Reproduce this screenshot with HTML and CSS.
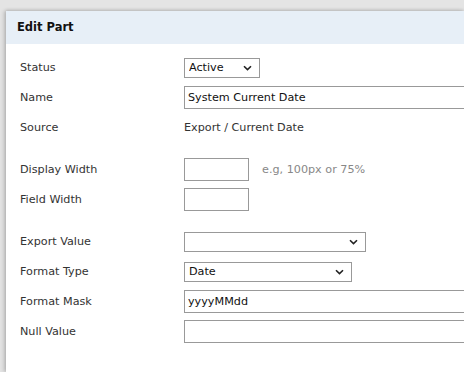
FILE: index.html
```html
<!DOCTYPE html>
<html lang="en">
<head>
	<meta charset="UTF-8">
	<title>Edit Part</title>
	<link rel="stylesheet" href="styles.css">
</head>
<body>
	<div class="panel">
		<div class="panel-head">Edit Part</div>
		<div class="panel-body">
			<div class="row">
				<label>Status</label>
				<span class="sel w-status">
					<select><option>Active</option></select>
					<svg class="chev" width="9" height="6" viewBox="0 0 9 6"><path d="M1 1.2 L4.5 4.6 L8 1.2" fill="none" stroke="#222" stroke-width="1.6"/></svg>
				</span>
			</div>
			<div class="row">
				<label>Name</label>
				<input class="txt w-full" type="text" value="System Current Date">
			</div>
			<div class="row">
				<label>Source</label>
				<span class="val">Export / Current Date</span>
			</div>
			<div class="row sep">
				<label>Display Width</label>
				<input class="txt w-small" type="text">
				<span class="hint">e.g, 100px or 75%</span>
			</div>
			<div class="row">
				<label>Field Width</label>
				<input class="txt w-small" type="text">
			</div>
			<div class="row sep">
				<label>Export Value</label>
				<span class="sel w-export">
					<select><option></option></select>
					<svg class="chev" width="9" height="6" viewBox="0 0 9 6"><path d="M1 1.2 L4.5 4.6 L8 1.2" fill="none" stroke="#222" stroke-width="1.6"/></svg>
				</span>
			</div>
			<div class="row">
				<label>Format Type</label>
				<span class="sel w-format">
					<select><option>Date</option></select>
					<svg class="chev" width="9" height="6" viewBox="0 0 9 6"><path d="M1 1.2 L4.5 4.6 L8 1.2" fill="none" stroke="#222" stroke-width="1.6"/></svg>
				</span>
			</div>
			<div class="row">
				<label>Format Mask</label>
				<input class="txt w-full" type="text" value="yyyyMMdd">
			</div>
			<div class="row">
				<label>Null Value</label>
				<input class="txt w-full" type="text">
			</div>
		</div>
	</div>
</body>
</html>
```

FILE: styles.css
```css
html, body {
	margin: 0;
	padding: 0;
	background: #e4e4e4;
	overflow: hidden;
}
body {
	font-family: "DejaVu Sans", Verdana, sans-serif;
	font-size: 11.2px;
	color: #333;
}
/* 面板 */
.panel {
	margin: 11px 0 0 6px;
	width: calc(100vw - 6px);
	height: calc(100vh - 11px);
	overflow: hidden;
	background: #fff;
	box-shadow: -2px 0 4px rgba(0,0,0,0.18), 0 -1px 3px rgba(0,0,0,0.12);
}
.panel-head {
	height: 33px;
	line-height: 33px;
	padding-left: 11px;
	background: #e7eff7;
	font-weight: bold;
	font-size: 11.5px;
	color: #111;
}
.panel-body {
	padding: 12px 0 0 14px;
}
/* 表单行 */
.row {
	display: flex;
	align-items: center;
	height: 23px;
	margin-bottom: 7px;
}
.row.sep {
	margin-top: 19px;
}
.row label {
	width: 164px;
	flex: none;
}
.val {
	color: #333;
}
.hint {
	margin-left: 13px;
	color: #888;
}
.txt {
	box-sizing: border-box;
	height: 23px;
	border: 1px solid #999;
	padding: 0 3px;
	font-family: inherit;
	font-size: 11.2px;
	color: #111;
	outline: none;
	margin: 0;
}
.w-full { width: 300px; flex: none; }
.w-small { width: 65px; }
/* 下拉框 */
.sel {
	position: relative;
	display: inline-block;
	height: 20px;
}
.sel select {
	-webkit-appearance: none;
	appearance: none;
	box-sizing: border-box;
	width: 100%;
	height: 20px;
	border: 1px solid #999;
	border-radius: 0;
	background: #fff;
	padding: 0 0 0 4px;
	font-family: inherit;
	font-size: 11.2px;
	color: #111;
	margin: 0;
	outline: none;
}
.sel .chev {
	position: absolute;
	right: 8px;
	top: 7px;
	pointer-events: none;
}
.w-status { width: 76px; }
.w-export { width: 182px; }
.w-format { width: 168px; }
```
